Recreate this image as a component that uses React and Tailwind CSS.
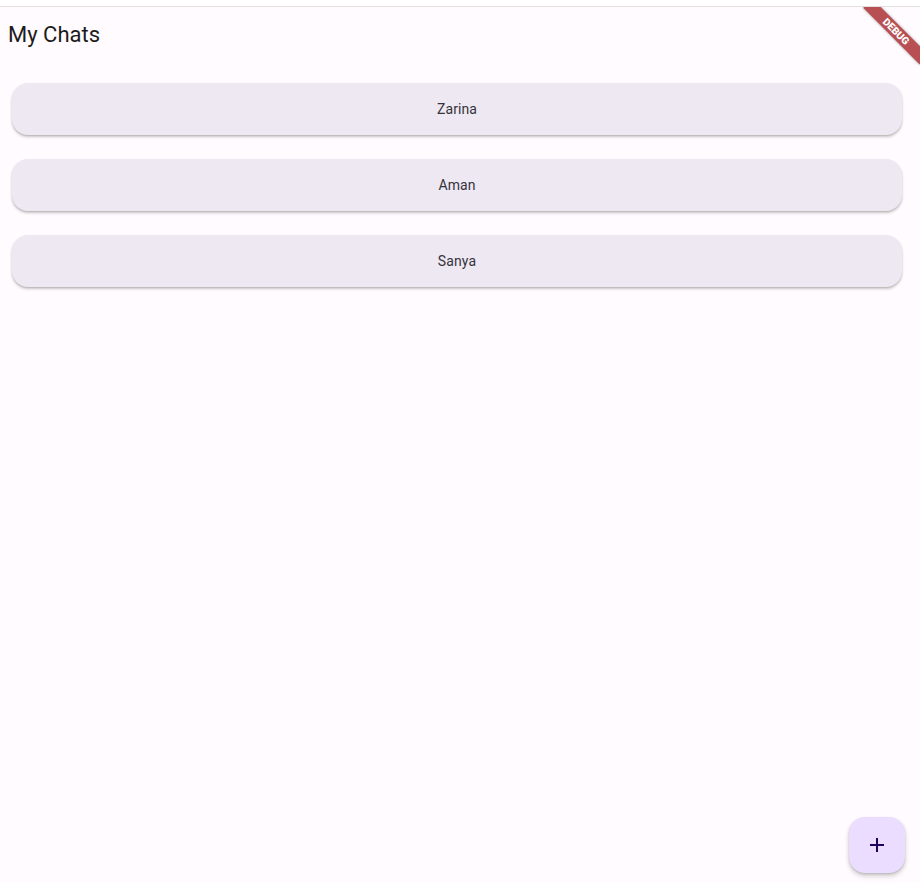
import React from "react";

const names = ["Zarina", "Aman", "Sanya"];

export default function App() {
  return (
    <div className="w-[920px] h-[883px] overflow-hidden bg-white" style={{ fontFamily: "Roboto, 'Noto Sans', sans-serif" }}>
      <div className="h-[7px] bg-white border-b border-[#e2e0e2]" />
      <div className="relative h-[876px] bg-[#fffbfe] overflow-hidden">
        <header className="h-[56px] flex items-center pl-[8px]">
          <h1 className="text-[22px] leading-[28px] text-[#1d1b20] font-normal">My Chats</h1>
        </header>
        <div className="flex flex-col gap-[24px] pt-[20px] pl-[12px] pr-[18px]">
          {names.map((n) => (
            <div
              key={n}
              className="h-[52px] rounded-[16px] bg-[#eee8f3] flex items-center justify-center shadow-[0_2px_3px_rgba(0,0,0,0.22),0_1px_1px_rgba(0,0,0,0.08)]"
            >
              <span className="text-[14px] tracking-[0.1px] text-[#36333b]">{n}</span>
            </div>
          ))}
        </div>

        <button className="absolute left-[849px] top-[810px] w-[56px] h-[56px] rounded-[16px] bg-[#eaddff] flex items-center justify-center shadow-[0_3px_5px_rgba(0,0,0,0.2),0_1px_2px_rgba(0,0,0,0.12)]">
          <svg width="24" height="24" viewBox="0 0 24 24">
            <path d="M19 13h-6v6h-2v-6H5v-2h6V5h2v6h6v2z" fill="#21005d" />
          </svg>
        </button>

        <div className="absolute left-[856px] top-[18px] w-[80px] h-[13px] rotate-45 bg-[rgba(168,40,44,0.82)] flex items-center justify-center shadow-[0_0_3px_rgba(0,0,0,0.35)]">
          <span className="text-[10.2px] leading-[10px] font-black text-white tracking-normal">DEBUG</span>
        </div>
      </div>
    </div>
  );
}
